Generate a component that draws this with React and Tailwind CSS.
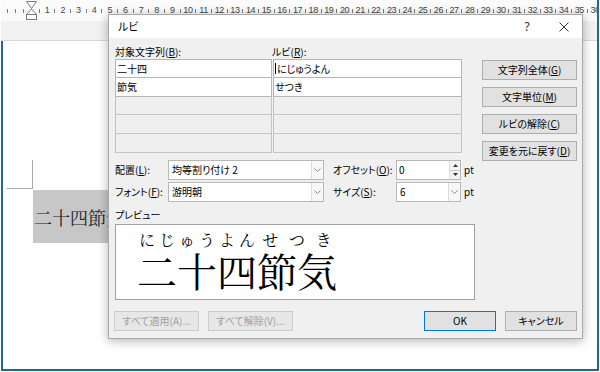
import React from "react";

const uiFont =
  "font-['Noto_Sans_CJK_JP','Noto_Sans',sans-serif] [font-feature-settings:'palt']";
const minchoFont =
  "font-['Noto_Serif_CJK_JP','Noto_Sans_CJK_JP',serif] [font-feature-settings:normal]";

// underlined access key inside a label
const U = ({ children }) => (
  <span className="underline underline-offset-[1px]">{children}</span>
);

const Btn = ({ children, className = "", primary = false, disabled = false }) => (
  <div
    className={`h-[20px] flex items-center justify-center border text-[10px] leading-none ${
      disabled
        ? "bg-[#e7e7e7] border-[#cccccc] text-[#a0a0a0]"
        : primary
        ? "bg-[#e1e1e1] border-[#0078d7] text-black"
        : "bg-[#e1e1e1] border-[#adadad] text-black"
    } ${className}`}
  >
    {children}
  </div>
);

const Chevron = () => (
  <svg width="7" height="4" viewBox="0 0 7 4">
    <path d="M0.5 0.5 L3.5 3.5 L6.5 0.5" fill="none" stroke="#8a8a8a" strokeWidth="1" />
  </svg>
);

const Combo = ({ value, className = "" }) => (
  <div className={`h-[20px] flex border border-[#b8b8b8] bg-white ${className}`}>
    <div className="flex-1 flex items-center pl-[3px] text-[10px] leading-none">{value}</div>
    <div className="w-[12px] flex items-center justify-center border-l border-[#dcdcdc] bg-[#f7f7f7]">
      <Chevron />
    </div>
  </div>
);

const Spin = ({ value, className = "" }) => (
  <div className={`h-[20px] flex border border-[#b8b8b8] bg-white ${className}`}>
    <div className="flex-1 flex items-center pl-[2px] text-[10px] leading-none">{value}</div>
    <div className="w-[11px] flex flex-col bg-[#f3f3f3] border-l border-[#dcdcdc]">
      <div className="flex-1 flex items-center justify-center border-b border-[#c8c8c8]">
        <svg width="5" height="3" viewBox="0 0 5 3">
          <path d="M0 3 L2.5 0 L5 3 Z" fill="#333" />
        </svg>
      </div>
      <div className="flex-1 flex items-center justify-center">
        <svg width="5" height="3" viewBox="0 0 5 3">
          <path d="M0 0 L2.5 3 L5 0 Z" fill="#333" />
        </svg>
      </div>
    </div>
  </div>
);

const rowHeights = ["h-[18px]", "h-[19px]", "h-[18px]", "h-[19px]", "h-[19px]"];

const TableColumn = ({ width, cells }) => (
  <div className={`${width} flex flex-col border-t border-[#b5b5b5]`}>
    {rowHeights.map((h, i) => (
      <div
        key={i}
        className={`${h} flex items-center pl-[1px] border-x border-b text-[10px] leading-none ${
          i < 2 ? "bg-white border-[#b5b5b5]" : "bg-[#efefef] border-[#c4c4c4]"
        }`}
      >
        {cells[i]}
      </div>
    ))}
  </div>
);

const Ruler = () => {
  const cells = ["t", "t", "t", "h"];
  for (let n = 1; n <= 36; n++) {
    cells.push("t", n);
  }
  return (
    <div className="h-[21px] flex items-center pl-[3px] bg-[#fbfbfb] overflow-hidden">
      {cells.map((c, i) => (
        <div key={i} className="w-[7.84px] shrink-0 flex justify-center items-center">
          {c === "t" ? (
            <div className="w-px h-[4px] bg-[#7c7c7c] shrink-0" />
          ) : c === "h" ? (
            <svg width="11" height="19" viewBox="0 0 11 19" className="shrink-0">
              <path d="M0.5 0.5 H10.5 L5.5 7.5 Z" fill="#fff" stroke="#7a7a7a" />
              <path d="M5.5 8 L0.5 13.5 H10.5 Z" fill="#fff" stroke="#7a7a7a" />
              <rect x="0.5" y="13.5" width="10" height="5" fill="#fff" stroke="#7a7a7a" />
            </svg>
          ) : (
            <span className="shrink-0 text-[9px] leading-none text-[#444] font-['Liberation_Sans',sans-serif] tracking-[-0.4px]">
              {c}
            </span>
          )}
        </div>
      ))}
    </div>
  );
};

export default function App() {
  return (
    <div className="relative w-[600px] h-[372px] bg-white overflow-hidden">
      <div className="ml-px w-[598px] h-[371px] flex flex-col">
        {/* Word ruler */}
        <div className="border-r-2 border-[#1f6b8f]">
          <Ruler />
          <div className="h-[20px] bg-[#f1f1f1] border-b border-[#d8d8d8]" />
        </div>

        {/* document page */}
        <div className="flex-1 flex flex-col border-x-2 border-b-2 border-[#1f6b8f]">
          <div className="mt-[119px] ml-[4px] w-[26px] h-[29px] border-r border-b border-[#a8a8a8]" />
          <div
            className={`mt-px ml-[30px] w-[110px] h-[53px] bg-[#c7c7c7] flex items-center pl-[1px] text-[18px] text-[#222] leading-none ${minchoFont}`}
          >
            二十四節気
          </div>
        </div>
      </div>

      {/* ルビ dialog */}
      <div
        className={`absolute left-[108px] top-[14px] w-[475px] border border-[#a9a9a9] bg-[#f0f0f0] shadow-[0_2px_10px_rgba(0,0,0,0.3)] text-black ${uiFont}`}
      >
        <div className="h-[23px] bg-white flex items-center pl-[9px] pr-[4px]">
          <span className="text-[11px] leading-none">ルビ</span>
          <div className="ml-auto flex items-center gap-[9px]">
            <div className="w-[28px] flex justify-center text-[12px] leading-none text-[#333] font-['Noto_Sans',sans-serif]">
              ?
            </div>
            <div className="w-[28px] flex justify-center">
              <svg width="10" height="10" viewBox="0 0 10 10">
                <path d="M0.5 0.5 L9.5 9.5 M9.5 0.5 L0.5 9.5" stroke="#333" strokeWidth="1" />
              </svg>
            </div>
          </div>
        </div>

        <div className="pt-[6px] pl-[6px] pr-[5px] pb-[7px]">
          <div className="flex gap-[7px]">
            {/* left column */}
            <div className="w-[360px] flex flex-col">
              <div className="h-[15px] flex items-center text-[10px] leading-none">
                <span className="w-[157px]">
                  対象文字列(<U>B</U>):
                </span>
                <span>
                  ルビ(<U>R</U>):
                </span>
              </div>

              <div className="flex gap-px">
                <TableColumn width="w-[157px]" cells={["二十四", "節気", "", "", ""]} />
                <TableColumn
                  width="w-[189px]"
                  cells={[
                    <span key="c" className="flex items-center">
                      <span className="w-px h-[11px] bg-black mr-px" />
                      にじゅうよん
                    </span>,
                    "せつき",
                    "",
                    "",
                    "",
                  ]}
                />
              </div>

              <div className="mt-[7px] h-[20px] flex items-center text-[10px] leading-none">
                <span className="w-[53px]">
                  配置(<U>L</U>):
                </span>
                <Combo value="均等割り付け 2" className="w-[156px]" />
                <span className="ml-[9px] w-[63px]">
                  オフセット(<U>O</U>):
                </span>
                <Spin value="0" className="w-[65px]" />
                <span className="ml-[3px] font-['Noto_Sans',sans-serif]">pt</span>
              </div>

              <div className="mt-[2px] h-[20px] flex items-center text-[10px] leading-none">
                <span className="w-[53px]">
                  フォント(<U>F</U>):
                </span>
                <Combo value="游明朝" className="w-[156px]" />
                <span className="ml-[9px] w-[63px]">
                  サイズ(<U>S</U>):
                </span>
                <Combo value="6" className="w-[65px]" />
                <span className="ml-[3px] font-['Noto_Sans',sans-serif]">pt</span>
              </div>

              <div className="mt-[6px] h-[14px] flex items-center text-[10px] leading-none">
                プレビュー
              </div>

              <div className="mt-[2px] h-[76px] border border-[#a0a0a0] bg-white pl-[21px] pt-[7px]">
                <div className={`flex text-black ${minchoFont}`}>
                  <div className="w-[120px] flex flex-col">
                    <div className="h-[16px] flex justify-around text-[16px] leading-[16px]">
                      <span>に</span>
                      <span>じ</span>
                      <span>ゅ</span>
                      <span>う</span>
                      <span>よ</span>
                      <span>ん</span>
                    </div>
                    <div className="mt-[2px] text-[40px] leading-[40px]">二十四</div>
                  </div>
                  <div className="w-[80px] flex flex-col">
                    <div className="h-[16px] flex justify-around text-[16px] leading-[16px]">
                      <span>せ</span>
                      <span>つ</span>
                      <span>き</span>
                    </div>
                    <div className="mt-[2px] text-[40px] leading-[40px]">節気</div>
                  </div>
                </div>
              </div>
            </div>

            {/* right column buttons */}
            <div className="w-[95px] flex flex-col gap-[7px] mt-[16px]">
              <Btn>
                文字列全体(<U>G</U>)
              </Btn>
              <Btn>
                文字単位(<U>M</U>)
              </Btn>
              <Btn>
                ルビの解除(<U>C</U>)
              </Btn>
              <Btn>
                変更を元に戻す(<U>D</U>)
              </Btn>
            </div>
          </div>

          {/* bottom buttons */}
          <div className="mt-[11px] flex">
            <Btn disabled className="-ml-px w-[85px]">
              すべて適用(A)...
            </Btn>
            <Btn disabled className="ml-[9px] w-[85px]">
              すべて解除(V)...
            </Btn>
            <Btn primary className="ml-auto w-[72px]">
              OK
            </Btn>
            <Btn className="ml-[9px] w-[72px]">キャンセル</Btn>
          </div>
        </div>
      </div>
    </div>
  );
}
